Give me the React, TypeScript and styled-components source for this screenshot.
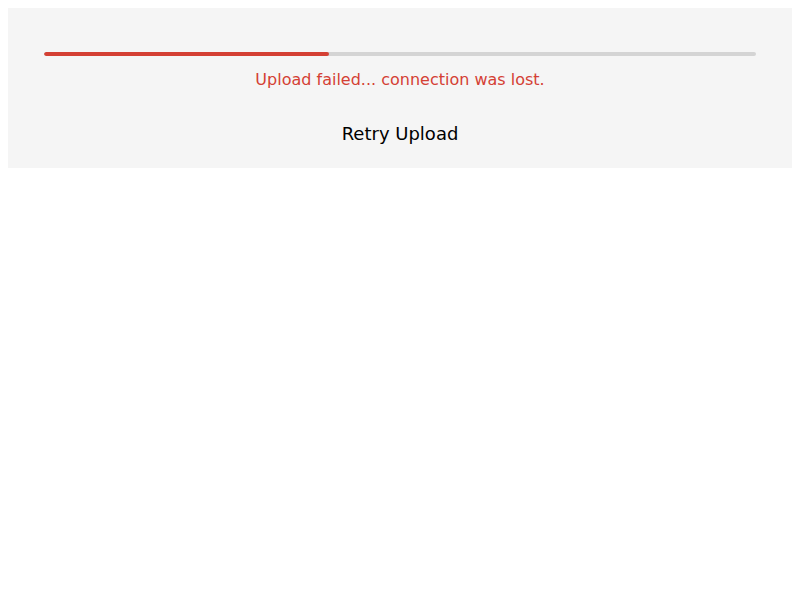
import React from "react";
import styled, { createGlobalStyle } from "styled-components";

const Global = createGlobalStyle`
  body { margin: 8px; font-family: "DejaVu Sans", sans-serif; background: #fff; }
`;

const Panel = styled.div`
  background: #f5f5f5;
  padding: 44px 36px 17px;
  display: flex;
  flex-direction: column;
  align-items: center;
`;

const Track = styled.div`
  width: 100%;
  height: 4px;
  border-radius: 2px;
  background: #d4d4d4;
  overflow: hidden;
`;

const Fill = styled.div`
  height: 100%;
  border-radius: 2px;
  background: #d44034;
`;

const Message = styled.div`
  margin-top: 14px;
  color: #d44034;
  font-size: 16px;
  line-height: 20px;
`;

const RetryButton = styled.button`
  margin-top: 27px;
  background: transparent;
  border: none;
  padding: 6px 12px;
  font-family: "DejaVu Sans", sans-serif;
  font-size: 18px;
  line-height: 22px;
  color: #000;
  cursor: pointer;
`;

export default function App() {
  const progress = 40;
  return (
    <>
      <Global />
      <Panel>
        <Track>
          <Fill style={{ width: `${progress}%` }} />
        </Track>
        <Message>Upload failed... connection was lost.</Message>
        <RetryButton>Retry Upload</RetryButton>
      </Panel>
    </>
  );
}
